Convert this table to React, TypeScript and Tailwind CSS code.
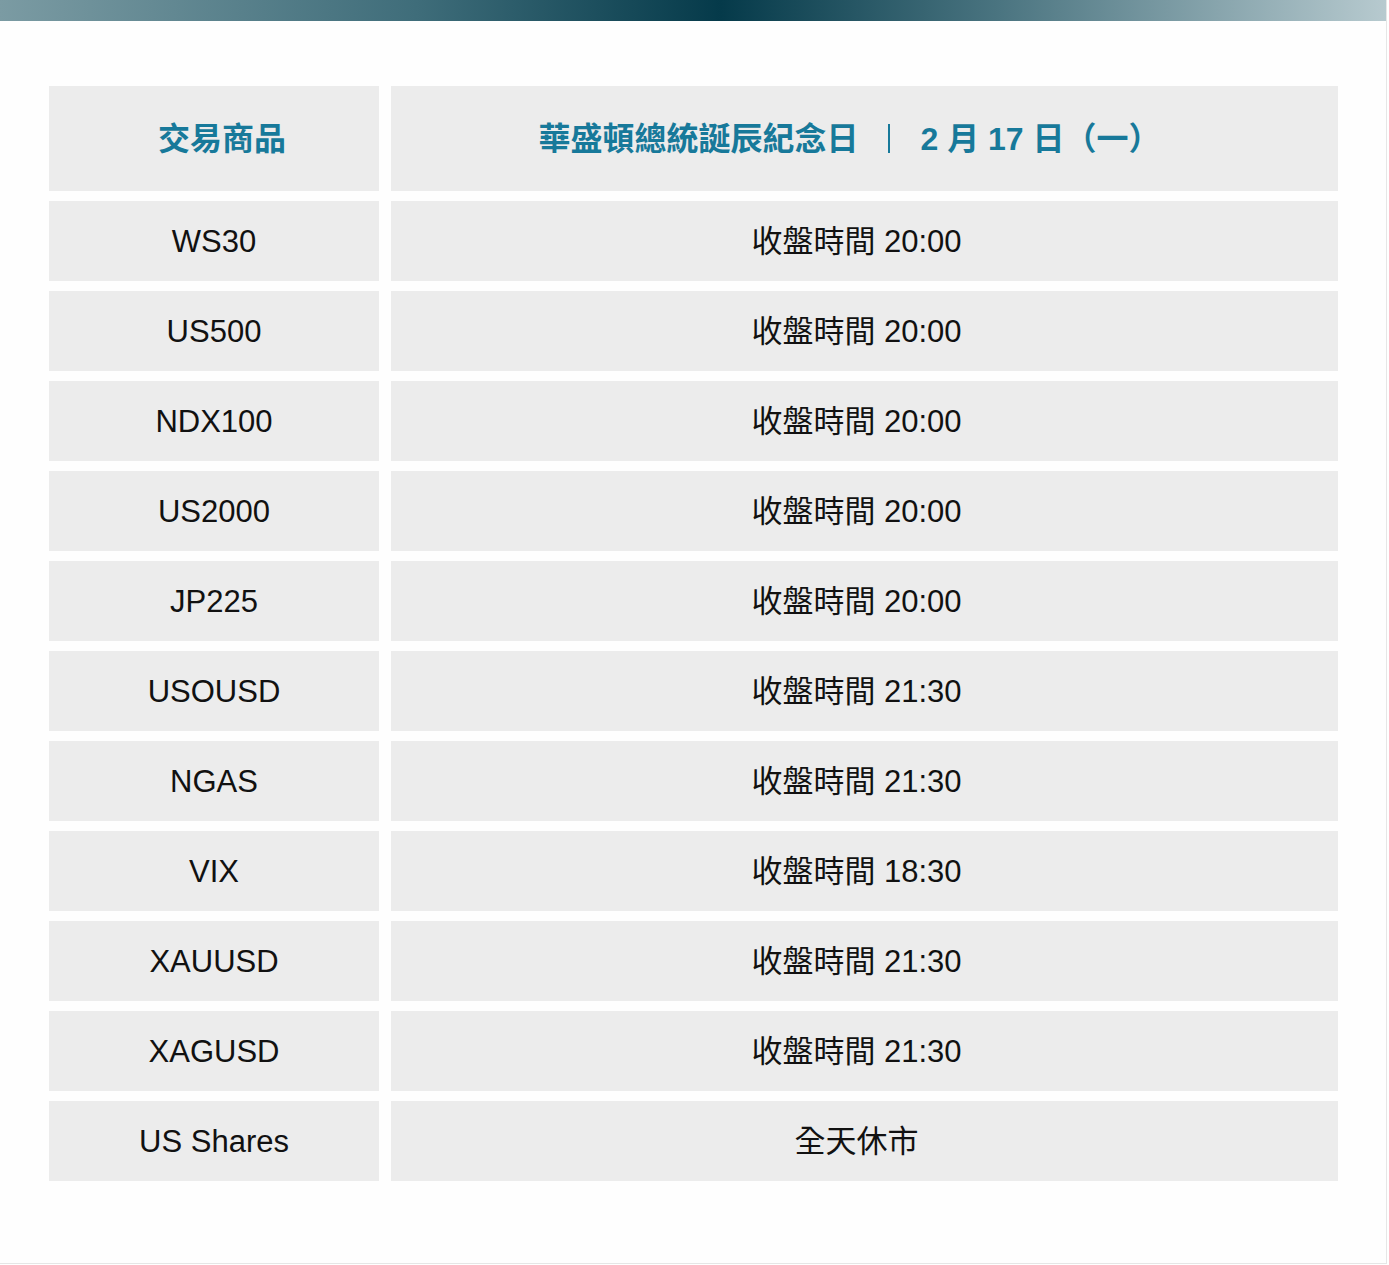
const rows: { symbol: string; time: string }[] = [
  { symbol: "WS30", time: "收盤時間 20:00" },
  { symbol: "US500", time: "收盤時間 20:00" },
  { symbol: "NDX100", time: "收盤時間 20:00" },
  { symbol: "US2000", time: "收盤時間 20:00" },
  { symbol: "JP225", time: "收盤時間 20:00" },
  { symbol: "USOUSD", time: "收盤時間 21:30" },
  { symbol: "NGAS", time: "收盤時間 21:30" },
  { symbol: "VIX", time: "收盤時間 18:30" },
  { symbol: "XAUUSD", time: "收盤時間 21:30" },
  { symbol: "XAGUSD", time: "收盤時間 21:30" },
  { symbol: "US Shares", time: "全天休市" },
];

const font = {
  fontFamily:
    '"Liberation Sans", "Noto Sans CJK TC", "Noto Sans CJK SC", sans-serif',
};

export default function App() {
  return (
    <div className="w-[1389px] bg-white" style={font}>
      <div className="w-[1387px] h-[1264px] border-r border-b border-[#e6e6e6] bg-[#fefefe]">
        {/* top gradient bar */}
        <div className="h-[21px] w-full bg-[linear-gradient(to_right,#7b9ba3_0%,#3f6d7a_30%,#053a4a_52%,#4a7480_72%,#b7cacf_100%)]" />

        <div className="pt-[65px] pl-[49px] w-[1338px]">
          {/* header row */}
          <div className="flex gap-[12px] h-[105px]">
            <div className="w-[330px] bg-[#ececec] flex items-center justify-center pl-[16px] text-[#17799a] font-bold text-[32px]">
              交易商品
            </div>
            <div className="flex-1 bg-[#ececec] flex items-center justify-center pr-[30px] text-[#17799a] font-bold text-[32px]">
              <span>華盛頓總統誕辰紀念日</span>
              <span className="inline-block w-[2px] h-[29px] bg-[#17799a] mx-[30px]" />
              <span>2 月 17 日（一）</span>
            </div>
          </div>

          {/* body rows */}
          <div className="flex flex-col gap-[10px] mt-[10px]">
            {rows.map((row, index) => (
              <div key={index} className="flex gap-[12px] h-[80px]">
                <div className="w-[330px] bg-[#ececec] flex items-center justify-center pt-[2px] text-[#111] text-[31px]">
                  {row.symbol}
                </div>
                <div className="flex-1 bg-[#ececec] flex items-center justify-center pr-[16px] pt-[2px] text-[#111] text-[31px]">
                  {row.time}
                </div>
              </div>
            ))}
          </div>
        </div>
      </div>
    </div>
  );
}
